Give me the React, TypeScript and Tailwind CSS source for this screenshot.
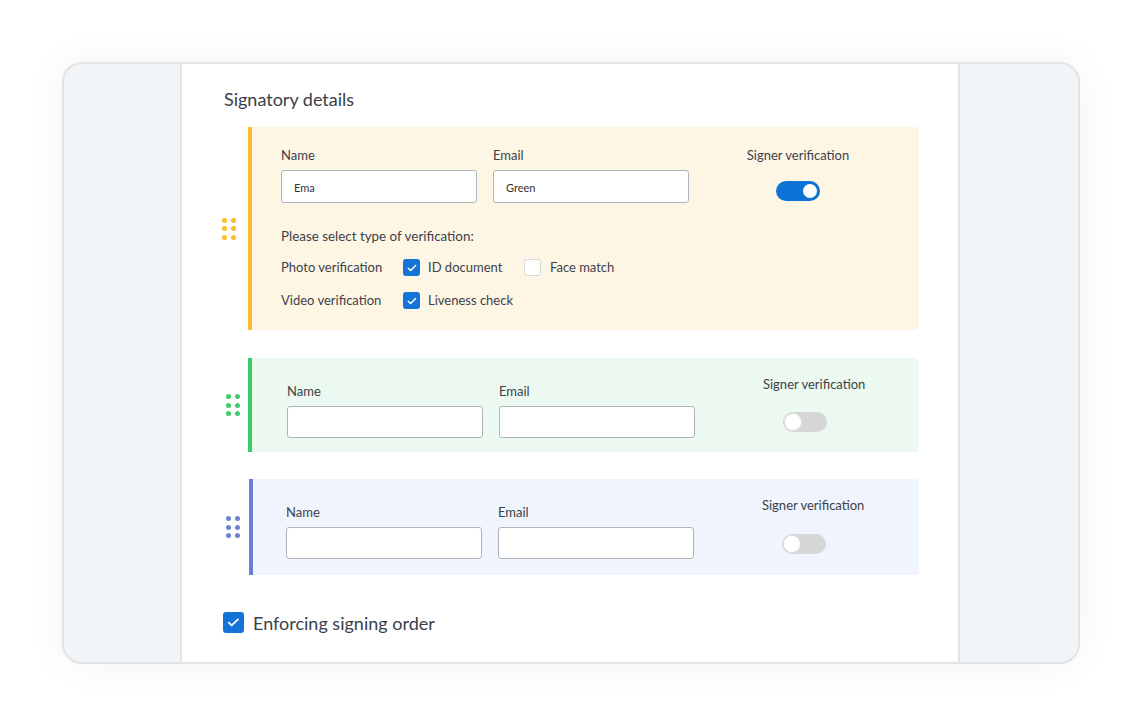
import React from "react";

const font = { fontFamily: "Lato, 'Open Sans', sans-serif" };

function Dots({ color, cls }: { color: string; cls: string }) {
  return (
    <div className={`grid grid-cols-2 gap-x-[4px] gap-y-[3.5px] ${cls}`}>
      {Array.from({ length: 6 }).map((_, i) => (
        <span key={i} className={`block h-[5px] w-[5px] rounded-full ${color}`} />
      ))}
    </div>
  );
}

function Check({ size = "h-[17px] w-[17px]" }: { size?: string }) {
  return (
    <span className={`flex items-center justify-center rounded-[3px] bg-[#1473d6] ${size}`}>
      <svg viewBox="0 0 16 16" className="h-[70%] w-[70%]" fill="none">
        <path d="M3 8.3l3.2 3.1L13 4.8" stroke="white" strokeWidth="2" strokeLinecap="round" strokeLinejoin="round" />
      </svg>
    </span>
  );
}

function Toggle({ on }: { on: boolean }) {
  if (on)
    return (
      <span className="flex h-[20px] w-[44px] items-center justify-end rounded-full bg-[#0c72d5] pr-[1px]">
        <span className="h-[18px] w-[18px] rounded-full border-2 border-[#0c72d5] bg-white" />
      </span>
    );
  return (
    <span className="flex h-[20px] w-[44px] items-center rounded-full bg-[#d6d6d6] pl-[1px]">
      <span className="h-[18px] w-[18px] rounded-full border border-[#e2e2e2] bg-white" />
    </span>
  );
}

function Field({ label, value, h }: { label: string; value?: string; h: string }) {
  return (
    <div className="flex w-[196px] flex-col">
      <span className="text-[13px] leading-[18px] text-[#3c4249]">{label}</span>
      <div className={`mt-[6px] flex items-center rounded-[3px] border border-[#aeb5ba] bg-white pl-[12px] pt-[4px] text-[11px] text-[#333] ${h}`}>
        {value}
      </div>
    </div>
  );
}

export default function App() {
  return (
    <div className="h-[726px] w-[1143px] bg-white pl-[62px] pt-[62px]" style={font}>
      <div className="flex h-[602px] w-[1018px] overflow-hidden rounded-[20px] border-2 border-[#e3e3e3] bg-[#f1f5f8] shadow-[0_0_40px_rgba(0,0,0,0.05)]">
        <div className="w-[116px] shrink-0" />
        <div className="flex w-[780px] shrink-0 flex-col border-x-2 border-[#e3e3e3] bg-white pl-[40px] pr-[39px] pt-[23px]">
          <h2 className="pl-[2px] text-[18px] leading-[24px] text-[#3a4047]">Signatory details</h2>

          {/* Yellow card */}
          <div className="mt-[16px] flex items-center">
            <div className="w-[26px] shrink-0">
              <Dots color="bg-[#fbbd2c]" cls="w-[14px]" />
            </div>
            <div className="flex h-[203px] flex-1 border-l-4 border-[#fdbd2e] rounded-r-[4px] bg-[#fef6e5] pl-[29px] pt-[19px]">
              <div className="flex flex-col">
                <div className="flex gap-[16px]">
                  <Field label="Name" value="Ema" h="h-[33px]" />
                  <Field label="Email" value="Green" h="h-[33px]" />
                </div>
                <div className="mt-[24px] text-[13.4px] leading-[18px] text-[#3c4249]">
                  Please select type of verification:
                </div>
                <div className="mt-[14px] flex h-[17px] items-center text-[13px] text-[#3c4249]">
                  <span className="w-[122px]">Photo verification</span>
                  <Check />
                  <span className="ml-[8px] w-[96px]">ID document</span>
                  <span className="h-[17px] w-[17px] rounded-[3px] border border-[#d8d8d8] bg-white" />
                  <span className="ml-[9px]">Face match</span>
                </div>
                <div className="mt-[16px] flex h-[17px] items-center text-[13px] text-[#3c4249]">
                  <span className="w-[122px]">Video verification</span>
                  <Check />
                  <span className="ml-[8px]">Liveness check</span>
                </div>
              </div>
              <div className="ml-[49px] flex w-[120px] flex-col items-center">
                <span className="text-[13px] leading-[18px] text-[#3c4249]">Signer verification</span>
                <span className="mt-[17px]">
                  <Toggle on />
                </span>
              </div>
            </div>
          </div>

          {/* Green card */}
          <div className="mt-[28px] flex items-center">
            <div className="w-[26px] shrink-0 pl-[4px]">
              <Dots color="bg-[#3ccc6b]" cls="w-[14px]" />
            </div>
            <div className="flex h-[94px] flex-1 border-l-4 border-[#37cc68] rounded-r-[4px] bg-[#ecf9f0] pl-[35px]">
              <div className="flex gap-[16px] pt-[24px]">
                <Field label="Name" h="h-[32px]" />
                <Field label="Email" h="h-[32px]" />
              </div>
              <div className="ml-[68px] flex flex-col items-start pt-[17px]">
                <span className="text-[13px] leading-[18px] text-[#3c4249]">Signer verification</span>
                <span className="ml-[20px] mt-[19px]">
                  <Toggle on={false} />
                </span>
              </div>
            </div>
          </div>

          {/* Blue card */}
          <div className="mt-[27px] flex items-center">
            <div className="w-[27px] shrink-0 pl-[4px]">
              <Dots color="bg-[#6f82d6]" cls="w-[14px]" />
            </div>
            <div className="flex h-[96px] flex-1 border-l-4 border-[#6b7fd6] rounded-r-[4px] bg-[#f0f4fd] pl-[33px]">
              <div className="flex gap-[16px] pt-[24px]">
                <Field label="Name" h="h-[32px]" />
                <Field label="Email" h="h-[32px]" />
              </div>
              <div className="ml-[68px] flex flex-col items-start pt-[17px]">
                <span className="text-[13px] leading-[18px] text-[#3c4249]">Signer verification</span>
                <span className="ml-[20px] mt-[20px]">
                  <Toggle on={false} />
                </span>
              </div>
            </div>
          </div>

          <div className="mt-[37px] flex items-center pl-[1px]">
            <Check size="h-[21px] w-[21px]" />
            <span className="ml-[9px] text-[18px] leading-[20px] text-[#3a4047]">Enforcing signing order</span>
          </div>
        </div>
        <div className="flex-1" />
      </div>
    </div>
  );
}
